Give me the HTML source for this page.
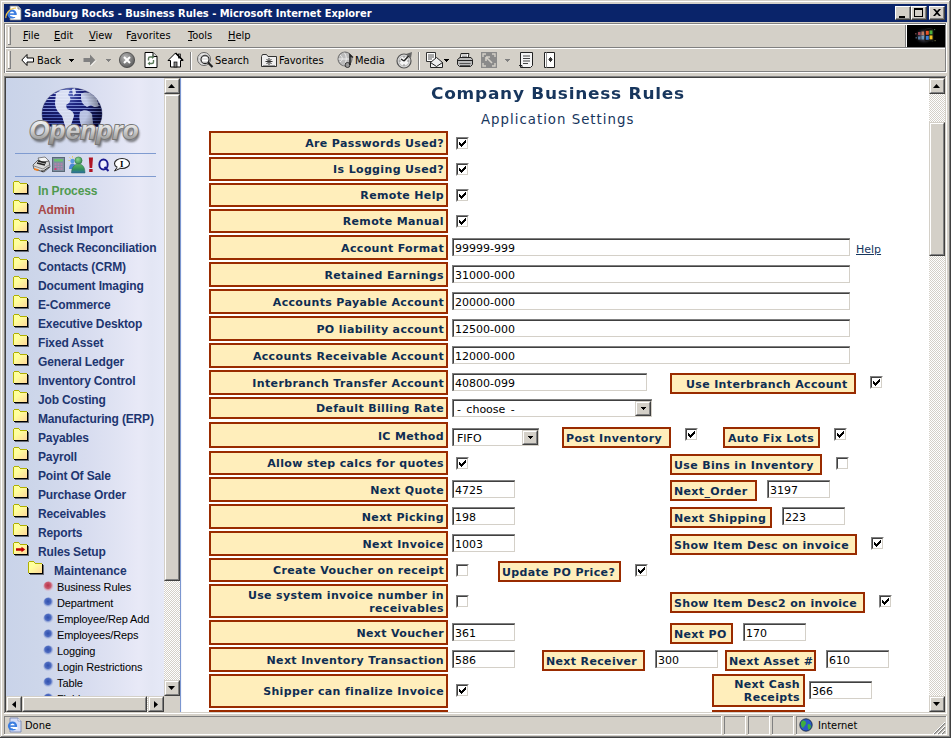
<!DOCTYPE html><html><head><meta charset="utf-8"><title>Sandburg Rocks - Business Rules</title><style>
*{margin:0;padding:0;box-sizing:border-box}
html,body{width:951px;height:738px;overflow:hidden;background:#d4d0c8}
body{position:relative;font-family:"DejaVu Sans Condensed","Liberation Sans",sans-serif;font-size:11px;color:#000}
.a{position:absolute}
.ln{position:absolute;overflow:hidden}
.ch{font-family:"DejaVu Sans Condensed","Liberation Sans",sans-serif;font-size:11px;white-space:nowrap;line-height:13px}
.lb{position:absolute;background:#ffeebb;border:2px solid #992b00;color:#0e2d52;font-family:"DejaVu Sans","Liberation Sans",sans-serif;font-weight:bold;font-size:11px;letter-spacing:.35px;text-align:right;line-height:13px;white-space:nowrap;padding-right:2px}
.lb span{position:absolute;right:2px;white-space:nowrap}
.in{position:absolute;background:#fff;border-top:1px solid #808080;border-left:1px solid #808080;height:18px}
.in i{position:absolute;left:0;top:0;right:0;bottom:0;border-top:1px solid #404040;border-left:1px solid #404040;border-right:1px solid #d4d0c8;border-bottom:1px solid #d4d0c8;font-style:normal;font-family:"DejaVu Sans","Liberation Sans",sans-serif;font-size:11px;line-height:13px;padding:2px 0 0 1px;white-space:nowrap;color:#000}
.cb{position:absolute;width:13px;height:13px;background:#fff;border-top:1px solid #808080;border-left:1px solid #808080;border-right:1px solid #fff;border-bottom:1px solid #fff}
.cb i{position:absolute;left:0;top:0;right:0;bottom:0;border-top:1px solid #404040;border-left:1px solid #404040;border-right:1px solid #d4d0c8;border-bottom:1px solid #d4d0c8}
.cb svg{position:absolute;left:2px;top:2px}
.btn{position:absolute;background:#d4d0c8;border-top:1px solid #fff;border-left:1px solid #fff;border-right:1px solid #404040;border-bottom:1px solid #404040}
.btn:before{content:"";position:absolute;left:0;top:0;right:0;bottom:0;border-right:1px solid #808080;border-bottom:1px solid #808080}
.sb{position:absolute;background:#d4d0c8;border-top:1px solid #d4d0c8;border-left:1px solid #d4d0c8;border-right:1px solid #404040;border-bottom:1px solid #404040}
.sb:before{content:"";position:absolute;left:0;top:0;right:0;bottom:0;border-top:1px solid #fff;border-left:1px solid #fff;border-right:1px solid #808080;border-bottom:1px solid #808080}
.trk{position:absolute;background-color:#fff;background-image:linear-gradient(45deg,#d4d0c8 25%,transparent 25%,transparent 75%,#d4d0c8 75%),linear-gradient(45deg,#d4d0c8 25%,transparent 25%,transparent 75%,#d4d0c8 75%);background-size:2px 2px;background-position:0 0,1px 1px}
.nav{position:absolute;font-family:"Liberation Sans",sans-serif;font-weight:bold;font-size:12px;color:#1e3670;white-space:nowrap;line-height:14px;letter-spacing:-.15px}
.sub{position:absolute;font-family:"Liberation Sans",sans-serif;font-size:11px;color:#000;white-space:nowrap;line-height:13px;letter-spacing:-.12px}
</style></head><body><div class="ln" style="left:1px;top:1px;width:948px;height:1px;background:#fff;"></div>
<div class="ln" style="left:1px;top:1px;width:1px;height:735px;background:#fff;"></div>
<div class="ln" style="left:950px;top:0px;width:1px;height:738px;background:#404040;"></div>
<div class="ln" style="left:0px;top:737px;width:951px;height:1px;background:#404040;"></div>
<div class="ln" style="left:949px;top:1px;width:1px;height:736px;background:#808080;"></div>
<div class="ln" style="left:1px;top:736px;width:949px;height:1px;background:#808080;"></div>
<div class="ln" style="left:4px;top:4px;width:943px;height:18px;background:#0a246a;"></div>
<div class="a ch" style="left:24px;top:7px;color:#fff;font-weight:bold;">Sandburg Rocks - Business Rules - Microsoft Internet Explorer</div>
<svg class="a" style="left:5px;top:5px" width="17" height="16" viewBox="0 0 17 16"><path d="M5 1h8l3 3v11H5z" fill="#fff" stroke="#777" stroke-width=".8"/><path d="M13 1v3h3" fill="#ddd" stroke="#777" stroke-width=".8"/><ellipse cx="7" cy="9" rx="4.6" ry="4.6" fill="#3b7de0"/><ellipse cx="7" cy="9" rx="2.3" ry="2.5" fill="#fff"/><rect x="3" y="8.3" width="8.5" height="1.6" fill="#3b7de0"/><rect x="7.5" y="10" width="4.5" height="2" fill="#fff"/><path d="M1 13C0 9 5 3 11 3" fill="none" stroke="#f5c542" stroke-width="1.1"/></svg>
<div class="btn" style="left:895px;top:6px;width:16px;height:14px"></div>
<div class="btn" style="left:911px;top:6px;width:16px;height:14px"></div>
<div class="btn" style="left:929px;top:6px;width:16px;height:14px"></div>
<div class="ln" style="left:899px;top:16px;width:6px;height:2px;background:#000;"></div>
<div class="a" style="left:914px;top:8px;width:9px;height:9px;border:1px solid #000;border-top-width:2px"></div>
<svg class="a" style="left:933px;top:9px" width="8" height="7" viewBox="0 0 8 7"><path d="M0 0h2l2 2 2-2h2L5 3.5 8 7H6L4 5 2 7H0l3-3.5z" fill="#000"/></svg>
<div class="ln" style="left:4px;top:23px;width:943px;height:1px;background:#808080;"></div>
<div class="ln" style="left:4px;top:24px;width:943px;height:1px;background:#fff;"></div>
<div class="ln" style="left:4px;top:47px;width:943px;height:1px;background:#808080;"></div>
<div class="ln" style="left:4px;top:48px;width:943px;height:1px;background:#fff;"></div>
<div class="ln" style="left:4px;top:71px;width:943px;height:1px;background:#808080;"></div>
<div class="ln" style="left:4px;top:72px;width:943px;height:1px;background:#fff;"></div>
<div class="ln" style="left:4px;top:23px;width:1px;height:50px;background:#808080;"></div>
<div class="ln" style="left:5px;top:24px;width:1px;height:48px;background:#fff;"></div>
<div class="ln" style="left:945px;top:24px;width:1px;height:48px;background:#808080;"></div>
<div class="ln" style="left:946px;top:23px;width:1px;height:50px;background:#fff;"></div>
<div class="ln" style="left:8px;top:27px;width:1px;height:17px;background:#fff;"></div>
<div class="ln" style="left:10px;top:27px;width:1px;height:18px;background:#808080;"></div>
<div class="ln" style="left:8px;top:44px;width:3px;height:1px;background:#808080;"></div>
<div class="ln" style="left:8px;top:51px;width:1px;height:17px;background:#fff;"></div>
<div class="ln" style="left:10px;top:51px;width:1px;height:18px;background:#808080;"></div>
<div class="ln" style="left:8px;top:68px;width:3px;height:1px;background:#808080;"></div>
<div class="a ch" style="left:23px;top:29px"><u>F</u>ile</div>
<div class="a ch" style="left:54px;top:29px"><u>E</u>dit</div>
<div class="a ch" style="left:89px;top:29px"><u>V</u>iew</div>
<div class="a ch" style="left:126px;top:29px">F<u>a</u>vorites</div>
<div class="a ch" style="left:188px;top:29px"><u>T</u>ools</div>
<div class="a ch" style="left:228px;top:29px"><u>H</u>elp</div>
<div class="ln" style="left:905px;top:25px;width:1px;height:22px;background:#808080;"></div>
<div class="ln" style="left:906px;top:25px;width:1px;height:22px;background:#fff;"></div>
<div class="ln" style="left:907px;top:25px;width:38px;height:22px;background:#000;"></div>
<svg class="a" style="left:913px;top:26px" width="26" height="20" viewBox="0 0 26 20"><defs><radialGradient id="tg"><stop offset="0" stop-color="#8a90a8" stop-opacity=".85"/><stop offset=".6" stop-color="#445" stop-opacity=".5"/><stop offset="1" stop-color="#000" stop-opacity="0"/></radialGradient></defs><ellipse cx="11" cy="10" rx="10" ry="9" fill="url(#tg)"/><path d="M12 3.5c2.5-1.2 5.5-1.2 8 0v12c-2.5-1.2-5.5-1.2-8 0z" fill="#0a0a0a" stroke="#1c1c1c" stroke-width="1"/><rect x="12.8" y="4.8" width="3" height="4" fill="#e8552a"/><rect x="16.5" y="4.4" width="3" height="4" fill="#4caf3c"/><rect x="12.8" y="9.8" width="3" height="4" fill="#3d7fd6"/><rect x="16.5" y="9.4" width="3" height="4" fill="#f2c522"/><rect x="5" y="6" width="2.5" height="3" fill="#c56" opacity=".75"/><rect x="8.5" y="5.5" width="2.5" height="3.5" fill="#d86" opacity=".8"/><rect x="5" y="10.5" width="2.5" height="3" fill="#69c" opacity=".75"/><rect x="8.5" y="10" width="2.5" height="3.5" fill="#7ac" opacity=".8"/><rect x="2" y="7" width="1.5" height="1.5" fill="#a66" opacity=".6"/><rect x="2.5" y="11" width="1.5" height="1.5" fill="#68a" opacity=".6"/><rect x="21" y="3" width="1.2" height="1.2" fill="#6a6" opacity=".6"/><rect x="21.5" y="14" width="1.2" height="1.2" fill="#aa6" opacity=".6"/></svg>
<div class="a ch" style="left:37px;top:54px;color:#000">Back</div>
<div class="a ch" style="left:215px;top:54px;color:#000">Search</div>
<div class="a ch" style="left:279px;top:54px;color:#000">Favorites</div>
<div class="a ch" style="left:355px;top:54px;color:#000">Media</div>
<svg class="a" style="left:21px;top:54px" width="13" height="12" viewBox="0 0 13 12"><path d="M6 .5L.8 6 6 11.5V8h6.5V4H6z" fill="#fff" stroke="#000" stroke-width="1"/></svg>
<svg class="a" style="left:69px;top:59px" width="5" height="3" viewBox="0 0 5 3" shape-rendering="crispEdges"><path d="M0 0h5v1h-1v1h-1v1h-1v-1h-1v-1h-1z" fill="#000"/></svg>
<svg class="a" style="left:83px;top:54px" width="14" height="12" viewBox="0 0 14 12"><path d="M7 .5L12.2 6 7 11.5V8H.5V4H7z" fill="#808080"/><path d="M7.8 11.8L13 6.5" stroke="#fff" stroke-width="1" fill="none"/></svg>
<svg class="a" style="left:106px;top:59px" width="5" height="3" viewBox="0 0 5 3" shape-rendering="crispEdges"><path d="M0 0h5v1h-1v1h-1v1h-1v-1h-1v-1h-1z" fill="#808080"/></svg>
<svg class="a" style="left:118px;top:51px" width="18" height="18" viewBox="0 0 18 18"><defs><radialGradient id="sg" cx=".4" cy=".35" r=".7"><stop offset="0" stop-color="#bbb"/><stop offset="1" stop-color="#555"/></radialGradient></defs><circle cx="9" cy="9" r="7.6" fill="url(#sg)" stroke="#444" stroke-width=".8"/><path d="M6 6l6 6M12 6l-6 6" stroke="#fff" stroke-width="2"/></svg>
<svg class="a" style="left:143px;top:51px" width="16" height="18" viewBox="0 0 16 18"><path d="M2 1.5h8l4 4v11H2z" fill="#fff" stroke="#000" stroke-width="1"/><path d="M10 1.5v4h4" fill="#ddd" stroke="#000" stroke-width="1"/><path d="M5.5 9.5V7.5q0-1.5 1.5-1.5h2.5" fill="none" stroke="#5a7a5a" stroke-width="1.4"/><path d="M9 4l2.5 2-2.5 2z" fill="#5a7a5a"/><path d="M10.5 9v2q0 1.5-1.5 1.5H6.5" fill="none" stroke="#5a7a5a" stroke-width="1.4"/><path d="M7 10.5l-2.5 2 2.5 2z" fill="#5a7a5a"/></svg>
<svg class="a" style="left:167px;top:51px" width="17" height="18" viewBox="0 0 17 18"><path d="M8.5 2L1 9.5h2.5V16h10V9.5H16z" fill="#fff" stroke="#000" stroke-width="1"/><rect x="11.5" y="3" width="2" height="4" fill="#999" stroke="#000" stroke-width=".7"/><rect x="7" y="11" width="3" height="5" fill="#888" stroke="#000" stroke-width=".7"/><path d="M8.5 2L16 9.5" stroke="#000" stroke-width="1.6"/></svg>
<div class="ln" style="left:190px;top:52px;width:1px;height:18px;background:#808080;"></div>
<div class="ln" style="left:191px;top:52px;width:1px;height:18px;background:#fff;"></div>
<svg class="a" style="left:196px;top:51px" width="19" height="18" viewBox="0 0 19 18"><circle cx="8" cy="8" r="6.5" fill="#e8e8e8" stroke="#666" stroke-width="1"/><circle cx="9" cy="8.5" r="4" fill="#fff" stroke="#222" stroke-width="1.3"/><path d="M12 11.5l4.5 4.5" stroke="#222" stroke-width="2.2"/><path d="M3 5h10M2 8h12M3 11h9" stroke="#aaa" stroke-width=".6"/></svg>
<svg class="a" style="left:261px;top:53px" width="16" height="14" viewBox="0 0 16 14"><path d="M.5 3.5V13.5H15.5V3.5H7L5.5 1.5H1.5z" fill="#eee" stroke="#333" stroke-width="1"/><path d="M8 5v7M4.5 8.5h7M5.5 6l5 5M10.5 6l-5 5" stroke="#333" stroke-width="1"/><path d="M2 12.5h12" stroke="#999" stroke-width="1"/></svg>
<svg class="a" style="left:337px;top:51px" width="19" height="18" viewBox="0 0 19 18"><circle cx="8" cy="8" r="7" fill="#bbb" stroke="#666" stroke-width="1"/><path d="M3 4c3 2 3 5 0 7M7 1.5c3 3 3 9 0 13M1.5 8h12" stroke="#eee" stroke-width="1" fill="none"/><circle cx="10.5" cy="14" r="2.5" fill="#999" stroke="#333" stroke-width="1"/><path d="M13 14V4l3 2.5" stroke="#222" stroke-width="1.6" fill="none"/></svg>
<svg class="a" style="left:395px;top:51px" width="19" height="18" viewBox="0 0 19 18"><circle cx="9" cy="10" r="7" fill="#ddd" stroke="#555" stroke-width="1.2"/><circle cx="9" cy="10" r="5" fill="#f4f4f4" stroke="#999" stroke-width=".6"/><path d="M9 10L15 3.5M9 10l-3-2" stroke="#222" stroke-width="1.5"/><path d="M11 3l6-2-1 6z" fill="#666"/><path d="M9 5.5v1M9 13.5v1M4.5 10h1M12.5 10h1" stroke="#333" stroke-width="1"/></svg>
<div class="ln" style="left:418px;top:52px;width:1px;height:18px;background:#808080;"></div>
<div class="ln" style="left:419px;top:52px;width:1px;height:18px;background:#fff;"></div>
<svg class="a" style="left:425px;top:51px" width="20" height="18" viewBox="0 0 20 18"><path d="M1.5 1.5h9v9h-9z" fill="#fff" stroke="#333" stroke-width="1"/><path d="M3 4h6M3 6h6M3 8h4" stroke="#555" stroke-width="1"/><path d="M5.5 11.5l6-5 6 5v5h-12z" fill="#eee" stroke="#222" stroke-width="1"/><path d="M5.5 11.5l6 4 6-4" fill="none" stroke="#222" stroke-width="1"/></svg>
<svg class="a" style="left:444px;top:59px" width="5" height="3" viewBox="0 0 5 3" shape-rendering="crispEdges"><path d="M0 0h5v1h-1v1h-1v1h-1v-1h-1v-1h-1z" fill="#000"/></svg>
<svg class="a" style="left:456px;top:52px" width="18" height="17" viewBox="0 0 18 17"><path d="M5 1.5h8l-1 5H4z" fill="#fff" stroke="#222" stroke-width="1"/><path d="M1.5 7.5L4 5.5h11l1.5 2v5l-2 2h-11l-2-2z" fill="#bbb" stroke="#222" stroke-width="1"/><path d="M1.5 8.5h15" stroke="#222" stroke-width="1"/><path d="M3.5 11.5h11M4 13.5h10" stroke="#555" stroke-width="1"/><path d="M6 3h5M6 4.5h5" stroke="#777" stroke-width=".7"/></svg>
<svg class="a" style="left:481px;top:52px" width="16" height="16" viewBox="0 0 16 16"><rect width="16" height="16" fill="#8a8a8a"/><path d="M2 5V2h3M14 5V2h-3M2 11v3h3M14 11v3h-3" stroke="#d4d0c8" stroke-width="1.4" fill="none"/><path d="M5 5l6 6M5 5h4M5 5v4" stroke="#d4d0c8" stroke-width="1.6" fill="none"/></svg>
<svg class="a" style="left:505px;top:59px" width="5" height="3" viewBox="0 0 5 3" shape-rendering="crispEdges"><path d="M0 0h5v1h-1v1h-1v1h-1v-1h-1v-1h-1z" fill="#808080"/></svg>
<svg class="a" style="left:518px;top:51px" width="17" height="18" viewBox="0 0 17 18"><path d="M2.5 1.5h12v13l-2 2h-10z" fill="#f4f4f4" stroke="#222" stroke-width="1"/><path d="M5 5h7M5 7.5h7M5 10h7M5 12.5h5" stroke="#444" stroke-width="1"/><path d="M1 14.5h3v2" fill="none" stroke="#222" stroke-width="1"/></svg>
<svg class="a" style="left:543px;top:51px" width="13" height="18" viewBox="0 0 13 18"><path d="M1.5 1.5h10v15h-10z" fill="#fff" stroke="#222" stroke-width="1"/><path d="M3.5 1.5v15" stroke="#999" stroke-width="1"/><path d="M7.5 6v5M5.5 8.5h4M6 7l3 3M9 7l-3 3" stroke="#222" stroke-width=".9"/></svg>
<div class="ln" style="left:4px;top:76px;width:943px;height:1px;background:#808080;"></div>
<div class="ln" style="left:4px;top:76px;width:1px;height:637px;background:#808080;"></div>
<div class="ln" style="left:5px;top:77px;width:941px;height:1px;background:#404040;"></div>
<div class="ln" style="left:5px;top:77px;width:1px;height:635px;background:#404040;"></div>
<div class="ln" style="left:4px;top:713px;width:943px;height:1px;background:#fff;"></div>
<div class="ln" style="left:946px;top:76px;width:1px;height:638px;background:#fff;"></div>
<div class="ln" style="left:5px;top:712px;width:941px;height:1px;background:#d4d0c8;"></div>
<div class="ln" style="left:945px;top:77px;width:1px;height:636px;background:#d4d0c8;"></div>
<div class="ln" style="left:182px;top:78px;width:747px;height:634px;background:#fff;"></div>
<div class="ln" style="left:180px;top:78px;width:1px;height:634px;background:#7b96d0;"></div>
<div class="ln" style="left:181px;top:78px;width:1px;height:634px;background:#f4f6fc;"></div>
<div class="a" style="left:6px;top:78px;width:158px;height:618px;overflow:hidden;background:linear-gradient(90deg,#c9d3e9 0,#cdd6ea 20%,#d7dcef 50%,#e0e3f3 70%,#e8e9f7 84%,#e3e6f4 92%,#e6e9f7 100%)">
<svg class="a" style="left:16px;top:4px" width="126" height="70" viewBox="0 0 126 70">
<defs>
<radialGradient id="gl" cx=".42" cy=".12" r=".75"><stop offset="0" stop-color="#6c7ecc"/><stop offset=".3" stop-color="#1e2480"/><stop offset="1" stop-color="#0a0a40"/></radialGradient>
<radialGradient id="gs" cx=".35" cy=".4" r=".7"><stop offset=".6" stop-color="#000" stop-opacity="0"/><stop offset="1" stop-color="#000018" stop-opacity=".55"/></radialGradient><linearGradient id="tx" x1="0" y1="0" x2="0" y2="1"><stop offset="0" stop-color="#ffffff"/><stop offset=".45" stop-color="#dcdcdc"/><stop offset=".75" stop-color="#a8a8a8"/><stop offset="1" stop-color="#8a8a8a"/></linearGradient>
<filter id="sh" x="-10%" y="-20%" width="130%" height="150%"><feGaussianBlur stdDeviation="1.3"/></filter>
<clipPath id="gc"><ellipse cx="50" cy="32" rx="30" ry="26"/></clipPath><clipPath id="gb"><rect x="0" y="0" width="126" height="45"/></clipPath>
</defs>
<g clip-path="url(#gb)"><ellipse cx="50" cy="32" rx="30.5" ry="26.5" fill="#8a8fa8"/>
<ellipse cx="50" cy="32" rx="30" ry="26" fill="url(#gl)"/>
<g clip-path="url(#gc)">
<path d="M15 8.5h70M15 11.5h70M15 14.5h70M15 17.5h70" stroke="#c2cef6" stroke-opacity=".9" stroke-width="1"/><path d="M15 20.5h70M15 23.5h70M15 26.5h70M15 29.5h70" stroke="#8799e0" stroke-opacity=".85" stroke-width="1"/><path d="M15 32.5h70M15 35.5h70M15 38.5h70M15 41.5h70M15 44.5h70M15 47.5h70" stroke="#5c70c8" stroke-opacity=".8" stroke-width="1"/>
<path d="M34 11c4-3 9-4 14-3l-2 5c3 2 3 5 1 8l-3 2 1 4c4 1 7 3 7 7l-3 9c-2 4-5 5-6 1l-3-10c-4-4-7-8-7-13z" fill="#e4eaf8" opacity=".93"/>
<path d="M50 7l3-1 1 5-3 3z" fill="#e4eaf8" opacity=".9"/>
<path d="M59 12c5-3 11-1 15 3l3 9c-3 2-6 1-8-1l-4 2c-4-2-6-5-6-9z" fill="#cfd8f0" opacity=".92"/>
<path d="M58 30c4-3 9-2 12 2l1 9c-1 5-4 9-8 10l-4-8c-2-5-2-9-1-13z" fill="#c7d0ec" opacity=".92"/>
<ellipse cx="50" cy="32" rx="30" ry="26" fill="url(#gs)"/>
</g></g>
<text x="62" y="57" text-anchor="middle" letter-spacing=".2" font-family="Liberation Sans, sans-serif" font-weight="bold" font-style="italic" font-size="26" fill="#444" opacity=".75" filter="url(#sh)" transform="translate(1.5 2.5)">Openpro</text>
<text x="62" y="57" text-anchor="middle" letter-spacing=".2" font-family="Liberation Sans, sans-serif" font-weight="bold" font-style="italic" font-size="26" fill="url(#tx)" stroke="#777" stroke-width="1.900" stroke-linejoin="round" paint-order="stroke">Openpro</text>
</svg><div class="ln" style="left:9px;top:75px;width:141px;height:1px;background:#7f9bd0"></div><div class="ln" style="left:9px;top:98px;width:141px;height:1px;background:#7f9bd0"></div><svg class="a" style="left:22px;top:74px" width="110" height="26" viewBox="0 0 110 26">
<defs><linearGradient id="pg" x1="0" y1="0" x2="0" y2="1"><stop offset="0" stop-color="#5fb85f"/><stop offset=".6" stop-color="#2f8f5f"/><stop offset="1" stop-color="#2f6fa8"/></linearGradient>
<radialGradient id="ph" cx=".4" cy=".35" r=".7"><stop offset="0" stop-color="#8fd88f"/><stop offset="1" stop-color="#2f8a4f"/></radialGradient></defs>
<g transform="translate(4 5)"><path d="M6 1l7-1 4 4-8 3z" fill="#f4f4f4" stroke="#555" stroke-width=".7"/><path d="M1 8l5-5 4 2 7-1 1 6-6 5-10-3z" fill="#d8d8d8" stroke="#444" stroke-width=".8"/><path d="M6 4l8 2M5 6l8 2" stroke="#222" stroke-width="1.3"/><path d="M2 9l9 3 6-4" stroke="#777" stroke-width=".8" fill="none"/><path d="M2 11l5 1.5-1 1.5-4-1z" fill="#f08020"/><path d="M10 13v2l7-5" stroke="#333" stroke-width="1" fill="none"/></g>
<g transform="translate(24 5)"><rect x=".5" y=".5" width="12" height="14" fill="#7f8fa0" stroke="#5a6878" stroke-width="1"/><rect x="2" y="2" width="9" height="2.5" fill="#6cc070"/><path d="M2.5 7h2M5.5 7h2M8.5 7h2M2.5 9.5h2M5.5 9.5h2M8.5 9.5h2M5.5 12h2M8.5 12h2" stroke="#c080b0" stroke-width="1.5"/><path d="M2.5 12h2" stroke="#e03070" stroke-width="1.8"/></g>
<g transform="translate(40 4)"><circle cx="4.5" cy="5" r="2.2" fill="#5a9ae0"/><path d="M1 13c0-3.5 1.5-5.5 3.5-5.5S8 9.5 8 13z" fill="#4a86d6"/><path d="M1.5 1.5l1 1M4.5 0v1.5M7 1.5l-1 1M.5 4.5h1.2" stroke="#e8c840" stroke-width=".8"/><circle cx="10.5" cy="4.5" r="3.6" fill="url(#ph)" stroke="#2a6a3a" stroke-width=".5"/><path d="M3.5 17c0-6 3-9 7-9s6.5 3 6.5 9z" fill="url(#pg)" stroke="#2a6a5a" stroke-width=".5"/></g>
<g transform="translate(60 5)"><path d="M.8 .5h4.2l-.8 10.5H1.6z" fill="#b01424"/><rect x="1.2" y="12" width="3.4" height="3" fill="#b01424"/></g>
<g transform="translate(70 6)"><ellipse cx="5.5" cy="6.5" rx="4.2" ry="5" fill="#f0f0ff" stroke="#1a1a90" stroke-width="1.900"/><path d="M6.5 9l4 4" stroke="#1a1a90" stroke-width="2"/></g>
<g transform="translate(85 6)"><ellipse cx="9" cy="5.5" rx="7.5" ry="5" fill="#fff" stroke="#222" stroke-width="1.100"/><path d="M4 9.5l-2.5 3.5 5.5-2.5z" fill="#fff" stroke="#222" stroke-width="1"/><path d="M4.5 9l2 1" stroke="#fff" stroke-width="1.5"/><text x="7" y="9" font-family="Liberation Serif, serif" font-weight="bold" font-size="9" fill="#000">I</text></g>
</svg><svg class="a" style="left:7px;top:103px" width="16" height="14" viewBox="0 0 16 14" shape-rendering="crispEdges"><defs><linearGradient id="fg0" x1="0" y1="0" x2="1" y2="1"><stop offset=".35" stop-color="#ffff9c"/><stop offset="1" stop-color="#ffd89a"/></linearGradient></defs><path d="M1 1h5l1 2h7v9H1z" fill="url(#fg0)"/><path d="M0 1h1v-1h5v1h1v1h-1v-1h-5v11h-1z" fill="#b0b000"/><path d="M7 2h7v1h-7z" fill="#b0b000"/><path d="M14 3h1v10h-14v-1h13z" fill="#000"/><path d="M15 4h1v10h-14v-1h13z" fill="#000" opacity=".5"/></svg><div class="nav" style="left:32px;top:106px;color:#4f9a4f">In Process</div><svg class="a" style="left:7px;top:122px" width="16" height="14" viewBox="0 0 16 14" shape-rendering="crispEdges"><defs><linearGradient id="fg1" x1="0" y1="0" x2="1" y2="1"><stop offset=".35" stop-color="#ffff9c"/><stop offset="1" stop-color="#ffd89a"/></linearGradient></defs><path d="M1 1h5l1 2h7v9H1z" fill="url(#fg1)"/><path d="M0 1h1v-1h5v1h1v1h-1v-1h-5v11h-1z" fill="#b0b000"/><path d="M7 2h7v1h-7z" fill="#b0b000"/><path d="M14 3h1v10h-14v-1h13z" fill="#000"/><path d="M15 4h1v10h-14v-1h13z" fill="#000" opacity=".5"/></svg><div class="nav" style="left:32px;top:125px;color:#a84848">Admin</div><svg class="a" style="left:7px;top:141px" width="16" height="14" viewBox="0 0 16 14" shape-rendering="crispEdges"><defs><linearGradient id="fg2" x1="0" y1="0" x2="1" y2="1"><stop offset=".35" stop-color="#ffff9c"/><stop offset="1" stop-color="#ffd89a"/></linearGradient></defs><path d="M1 1h5l1 2h7v9H1z" fill="url(#fg2)"/><path d="M0 1h1v-1h5v1h1v1h-1v-1h-5v11h-1z" fill="#b0b000"/><path d="M7 2h7v1h-7z" fill="#b0b000"/><path d="M14 3h1v10h-14v-1h13z" fill="#000"/><path d="M15 4h1v10h-14v-1h13z" fill="#000" opacity=".5"/></svg><div class="nav" style="left:32px;top:144px;color:#1e3670">Assist Import</div><svg class="a" style="left:7px;top:160px" width="16" height="14" viewBox="0 0 16 14" shape-rendering="crispEdges"><defs><linearGradient id="fg3" x1="0" y1="0" x2="1" y2="1"><stop offset=".35" stop-color="#ffff9c"/><stop offset="1" stop-color="#ffd89a"/></linearGradient></defs><path d="M1 1h5l1 2h7v9H1z" fill="url(#fg3)"/><path d="M0 1h1v-1h5v1h1v1h-1v-1h-5v11h-1z" fill="#b0b000"/><path d="M7 2h7v1h-7z" fill="#b0b000"/><path d="M14 3h1v10h-14v-1h13z" fill="#000"/><path d="M15 4h1v10h-14v-1h13z" fill="#000" opacity=".5"/></svg><div class="nav" style="left:32px;top:163px;color:#1e3670">Check Reconciliation</div><svg class="a" style="left:7px;top:179px" width="16" height="14" viewBox="0 0 16 14" shape-rendering="crispEdges"><defs><linearGradient id="fg4" x1="0" y1="0" x2="1" y2="1"><stop offset=".35" stop-color="#ffff9c"/><stop offset="1" stop-color="#ffd89a"/></linearGradient></defs><path d="M1 1h5l1 2h7v9H1z" fill="url(#fg4)"/><path d="M0 1h1v-1h5v1h1v1h-1v-1h-5v11h-1z" fill="#b0b000"/><path d="M7 2h7v1h-7z" fill="#b0b000"/><path d="M14 3h1v10h-14v-1h13z" fill="#000"/><path d="M15 4h1v10h-14v-1h13z" fill="#000" opacity=".5"/></svg><div class="nav" style="left:32px;top:182px;color:#1e3670">Contacts (CRM)</div><svg class="a" style="left:7px;top:198px" width="16" height="14" viewBox="0 0 16 14" shape-rendering="crispEdges"><defs><linearGradient id="fg5" x1="0" y1="0" x2="1" y2="1"><stop offset=".35" stop-color="#ffff9c"/><stop offset="1" stop-color="#ffd89a"/></linearGradient></defs><path d="M1 1h5l1 2h7v9H1z" fill="url(#fg5)"/><path d="M0 1h1v-1h5v1h1v1h-1v-1h-5v11h-1z" fill="#b0b000"/><path d="M7 2h7v1h-7z" fill="#b0b000"/><path d="M14 3h1v10h-14v-1h13z" fill="#000"/><path d="M15 4h1v10h-14v-1h13z" fill="#000" opacity=".5"/></svg><div class="nav" style="left:32px;top:201px;color:#1e3670">Document Imaging</div><svg class="a" style="left:7px;top:217px" width="16" height="14" viewBox="0 0 16 14" shape-rendering="crispEdges"><defs><linearGradient id="fg6" x1="0" y1="0" x2="1" y2="1"><stop offset=".35" stop-color="#ffff9c"/><stop offset="1" stop-color="#ffd89a"/></linearGradient></defs><path d="M1 1h5l1 2h7v9H1z" fill="url(#fg6)"/><path d="M0 1h1v-1h5v1h1v1h-1v-1h-5v11h-1z" fill="#b0b000"/><path d="M7 2h7v1h-7z" fill="#b0b000"/><path d="M14 3h1v10h-14v-1h13z" fill="#000"/><path d="M15 4h1v10h-14v-1h13z" fill="#000" opacity=".5"/></svg><div class="nav" style="left:32px;top:220px;color:#1e3670">E-Commerce</div><svg class="a" style="left:7px;top:236px" width="16" height="14" viewBox="0 0 16 14" shape-rendering="crispEdges"><defs><linearGradient id="fg7" x1="0" y1="0" x2="1" y2="1"><stop offset=".35" stop-color="#ffff9c"/><stop offset="1" stop-color="#ffd89a"/></linearGradient></defs><path d="M1 1h5l1 2h7v9H1z" fill="url(#fg7)"/><path d="M0 1h1v-1h5v1h1v1h-1v-1h-5v11h-1z" fill="#b0b000"/><path d="M7 2h7v1h-7z" fill="#b0b000"/><path d="M14 3h1v10h-14v-1h13z" fill="#000"/><path d="M15 4h1v10h-14v-1h13z" fill="#000" opacity=".5"/></svg><div class="nav" style="left:32px;top:239px;color:#1e3670">Executive Desktop</div><svg class="a" style="left:7px;top:255px" width="16" height="14" viewBox="0 0 16 14" shape-rendering="crispEdges"><defs><linearGradient id="fg8" x1="0" y1="0" x2="1" y2="1"><stop offset=".35" stop-color="#ffff9c"/><stop offset="1" stop-color="#ffd89a"/></linearGradient></defs><path d="M1 1h5l1 2h7v9H1z" fill="url(#fg8)"/><path d="M0 1h1v-1h5v1h1v1h-1v-1h-5v11h-1z" fill="#b0b000"/><path d="M7 2h7v1h-7z" fill="#b0b000"/><path d="M14 3h1v10h-14v-1h13z" fill="#000"/><path d="M15 4h1v10h-14v-1h13z" fill="#000" opacity=".5"/></svg><div class="nav" style="left:32px;top:258px;color:#1e3670">Fixed Asset</div><svg class="a" style="left:7px;top:274px" width="16" height="14" viewBox="0 0 16 14" shape-rendering="crispEdges"><defs><linearGradient id="fg9" x1="0" y1="0" x2="1" y2="1"><stop offset=".35" stop-color="#ffff9c"/><stop offset="1" stop-color="#ffd89a"/></linearGradient></defs><path d="M1 1h5l1 2h7v9H1z" fill="url(#fg9)"/><path d="M0 1h1v-1h5v1h1v1h-1v-1h-5v11h-1z" fill="#b0b000"/><path d="M7 2h7v1h-7z" fill="#b0b000"/><path d="M14 3h1v10h-14v-1h13z" fill="#000"/><path d="M15 4h1v10h-14v-1h13z" fill="#000" opacity=".5"/></svg><div class="nav" style="left:32px;top:277px;color:#1e3670">General Ledger</div><svg class="a" style="left:7px;top:293px" width="16" height="14" viewBox="0 0 16 14" shape-rendering="crispEdges"><defs><linearGradient id="fg10" x1="0" y1="0" x2="1" y2="1"><stop offset=".35" stop-color="#ffff9c"/><stop offset="1" stop-color="#ffd89a"/></linearGradient></defs><path d="M1 1h5l1 2h7v9H1z" fill="url(#fg10)"/><path d="M0 1h1v-1h5v1h1v1h-1v-1h-5v11h-1z" fill="#b0b000"/><path d="M7 2h7v1h-7z" fill="#b0b000"/><path d="M14 3h1v10h-14v-1h13z" fill="#000"/><path d="M15 4h1v10h-14v-1h13z" fill="#000" opacity=".5"/></svg><div class="nav" style="left:32px;top:296px;color:#1e3670">Inventory Control</div><svg class="a" style="left:7px;top:312px" width="16" height="14" viewBox="0 0 16 14" shape-rendering="crispEdges"><defs><linearGradient id="fg11" x1="0" y1="0" x2="1" y2="1"><stop offset=".35" stop-color="#ffff9c"/><stop offset="1" stop-color="#ffd89a"/></linearGradient></defs><path d="M1 1h5l1 2h7v9H1z" fill="url(#fg11)"/><path d="M0 1h1v-1h5v1h1v1h-1v-1h-5v11h-1z" fill="#b0b000"/><path d="M7 2h7v1h-7z" fill="#b0b000"/><path d="M14 3h1v10h-14v-1h13z" fill="#000"/><path d="M15 4h1v10h-14v-1h13z" fill="#000" opacity=".5"/></svg><div class="nav" style="left:32px;top:315px;color:#1e3670">Job Costing</div><svg class="a" style="left:7px;top:331px" width="16" height="14" viewBox="0 0 16 14" shape-rendering="crispEdges"><defs><linearGradient id="fg12" x1="0" y1="0" x2="1" y2="1"><stop offset=".35" stop-color="#ffff9c"/><stop offset="1" stop-color="#ffd89a"/></linearGradient></defs><path d="M1 1h5l1 2h7v9H1z" fill="url(#fg12)"/><path d="M0 1h1v-1h5v1h1v1h-1v-1h-5v11h-1z" fill="#b0b000"/><path d="M7 2h7v1h-7z" fill="#b0b000"/><path d="M14 3h1v10h-14v-1h13z" fill="#000"/><path d="M15 4h1v10h-14v-1h13z" fill="#000" opacity=".5"/></svg><div class="nav" style="left:32px;top:334px;color:#1e3670">Manufacturing (ERP)</div><svg class="a" style="left:7px;top:350px" width="16" height="14" viewBox="0 0 16 14" shape-rendering="crispEdges"><defs><linearGradient id="fg13" x1="0" y1="0" x2="1" y2="1"><stop offset=".35" stop-color="#ffff9c"/><stop offset="1" stop-color="#ffd89a"/></linearGradient></defs><path d="M1 1h5l1 2h7v9H1z" fill="url(#fg13)"/><path d="M0 1h1v-1h5v1h1v1h-1v-1h-5v11h-1z" fill="#b0b000"/><path d="M7 2h7v1h-7z" fill="#b0b000"/><path d="M14 3h1v10h-14v-1h13z" fill="#000"/><path d="M15 4h1v10h-14v-1h13z" fill="#000" opacity=".5"/></svg><div class="nav" style="left:32px;top:353px;color:#1e3670">Payables</div><svg class="a" style="left:7px;top:369px" width="16" height="14" viewBox="0 0 16 14" shape-rendering="crispEdges"><defs><linearGradient id="fg14" x1="0" y1="0" x2="1" y2="1"><stop offset=".35" stop-color="#ffff9c"/><stop offset="1" stop-color="#ffd89a"/></linearGradient></defs><path d="M1 1h5l1 2h7v9H1z" fill="url(#fg14)"/><path d="M0 1h1v-1h5v1h1v1h-1v-1h-5v11h-1z" fill="#b0b000"/><path d="M7 2h7v1h-7z" fill="#b0b000"/><path d="M14 3h1v10h-14v-1h13z" fill="#000"/><path d="M15 4h1v10h-14v-1h13z" fill="#000" opacity=".5"/></svg><div class="nav" style="left:32px;top:372px;color:#1e3670">Payroll</div><svg class="a" style="left:7px;top:388px" width="16" height="14" viewBox="0 0 16 14" shape-rendering="crispEdges"><defs><linearGradient id="fg15" x1="0" y1="0" x2="1" y2="1"><stop offset=".35" stop-color="#ffff9c"/><stop offset="1" stop-color="#ffd89a"/></linearGradient></defs><path d="M1 1h5l1 2h7v9H1z" fill="url(#fg15)"/><path d="M0 1h1v-1h5v1h1v1h-1v-1h-5v11h-1z" fill="#b0b000"/><path d="M7 2h7v1h-7z" fill="#b0b000"/><path d="M14 3h1v10h-14v-1h13z" fill="#000"/><path d="M15 4h1v10h-14v-1h13z" fill="#000" opacity=".5"/></svg><div class="nav" style="left:32px;top:391px;color:#1e3670">Point Of Sale</div><svg class="a" style="left:7px;top:407px" width="16" height="14" viewBox="0 0 16 14" shape-rendering="crispEdges"><defs><linearGradient id="fg16" x1="0" y1="0" x2="1" y2="1"><stop offset=".35" stop-color="#ffff9c"/><stop offset="1" stop-color="#ffd89a"/></linearGradient></defs><path d="M1 1h5l1 2h7v9H1z" fill="url(#fg16)"/><path d="M0 1h1v-1h5v1h1v1h-1v-1h-5v11h-1z" fill="#b0b000"/><path d="M7 2h7v1h-7z" fill="#b0b000"/><path d="M14 3h1v10h-14v-1h13z" fill="#000"/><path d="M15 4h1v10h-14v-1h13z" fill="#000" opacity=".5"/></svg><div class="nav" style="left:32px;top:410px;color:#1e3670">Purchase Order</div><svg class="a" style="left:7px;top:426px" width="16" height="14" viewBox="0 0 16 14" shape-rendering="crispEdges"><defs><linearGradient id="fg17" x1="0" y1="0" x2="1" y2="1"><stop offset=".35" stop-color="#ffff9c"/><stop offset="1" stop-color="#ffd89a"/></linearGradient></defs><path d="M1 1h5l1 2h7v9H1z" fill="url(#fg17)"/><path d="M0 1h1v-1h5v1h1v1h-1v-1h-5v11h-1z" fill="#b0b000"/><path d="M7 2h7v1h-7z" fill="#b0b000"/><path d="M14 3h1v10h-14v-1h13z" fill="#000"/><path d="M15 4h1v10h-14v-1h13z" fill="#000" opacity=".5"/></svg><div class="nav" style="left:32px;top:429px;color:#1e3670">Receivables</div><svg class="a" style="left:7px;top:445px" width="16" height="14" viewBox="0 0 16 14" shape-rendering="crispEdges"><defs><linearGradient id="fg18" x1="0" y1="0" x2="1" y2="1"><stop offset=".35" stop-color="#ffff9c"/><stop offset="1" stop-color="#ffd89a"/></linearGradient></defs><path d="M1 1h5l1 2h7v9H1z" fill="url(#fg18)"/><path d="M0 1h1v-1h5v1h1v1h-1v-1h-5v11h-1z" fill="#b0b000"/><path d="M7 2h7v1h-7z" fill="#b0b000"/><path d="M14 3h1v10h-14v-1h13z" fill="#000"/><path d="M15 4h1v10h-14v-1h13z" fill="#000" opacity=".5"/></svg><div class="nav" style="left:32px;top:448px;color:#1e3670">Reports</div><svg class="a" style="left:7px;top:464px" width="16" height="14" viewBox="0 0 16 14" shape-rendering="crispEdges"><defs><linearGradient id="fg19" x1="0" y1="0" x2="1" y2="1"><stop offset=".35" stop-color="#ffff9c"/><stop offset="1" stop-color="#ffd89a"/></linearGradient></defs><path d="M1 1h5l1 2h7v9H1z" fill="url(#fg19)"/><path d="M0 1h1v-1h5v1h1v1h-1v-1h-5v11h-1z" fill="#b0b000"/><path d="M7 2h7v1h-7z" fill="#b0b000"/><path d="M14 3h1v10h-14v-1h13z" fill="#000"/><path d="M15 4h1v10h-14v-1h13z" fill="#000" opacity=".5"/><path shape-rendering="auto" d="M3 6.3h5.5V4.8l3.700 2.700-3.700 2.700V8.700H3z" fill="#c00000"/></svg><div class="nav" style="left:32px;top:467px;color:#1e3670">Rules Setup</div><svg class="a" style="left:22px;top:483px" width="16" height="14" viewBox="0 0 16 14" shape-rendering="crispEdges"><defs><linearGradient id="fg99" x1="0" y1="0" x2="1" y2="1"><stop offset=".35" stop-color="#ffff9c"/><stop offset="1" stop-color="#ffd89a"/></linearGradient></defs><path d="M1 1h5l1 2h7v9H1z" fill="url(#fg99)"/><path d="M0 1h1v-1h5v1h1v1h-1v-1h-5v11h-1z" fill="#b0b000"/><path d="M7 2h7v1h-7z" fill="#b0b000"/><path d="M14 3h1v10h-14v-1h13z" fill="#000"/><path d="M15 4h1v10h-14v-1h13z" fill="#000" opacity=".5"/></svg><div class="nav" style="left:48px;top:486px;letter-spacing:0">Maintenance</div><svg width="0" height="0" class="a"><defs><radialGradient id="bb" cx=".45" cy=".4" r=".6"><stop offset="0" stop-color="#2f4fae"/><stop offset=".5" stop-color="#4f6cc0"/><stop offset="1" stop-color="#c8d2ec" stop-opacity="0"/></radialGradient><radialGradient id="br" cx=".45" cy=".4" r=".6"><stop offset="0" stop-color="#b8324a"/><stop offset=".5" stop-color="#c95a6e"/><stop offset="1" stop-color="#e6c8d6" stop-opacity="0"/></radialGradient></defs></svg><svg class="a" style="left:37px;top:503px" width="11" height="11"><circle cx="5.5" cy="5.5" r="5.2" fill="url(#br)"/></svg><div class="sub" style="left:51px;top:503px">Business Rules</div><svg class="a" style="left:37px;top:519px" width="11" height="11"><circle cx="5.5" cy="5.5" r="5.2" fill="url(#bb)"/></svg><div class="sub" style="left:51px;top:519px">Department</div><svg class="a" style="left:37px;top:535px" width="11" height="11"><circle cx="5.5" cy="5.5" r="5.2" fill="url(#bb)"/></svg><div class="sub" style="left:51px;top:535px">Employee/Rep Add</div><svg class="a" style="left:37px;top:551px" width="11" height="11"><circle cx="5.5" cy="5.5" r="5.2" fill="url(#bb)"/></svg><div class="sub" style="left:51px;top:551px">Employees/Reps</div><svg class="a" style="left:37px;top:567px" width="11" height="11"><circle cx="5.5" cy="5.5" r="5.2" fill="url(#bb)"/></svg><div class="sub" style="left:51px;top:567px">Logging</div><svg class="a" style="left:37px;top:583px" width="11" height="11"><circle cx="5.5" cy="5.5" r="5.2" fill="url(#bb)"/></svg><div class="sub" style="left:51px;top:583px">Login Restrictions</div><svg class="a" style="left:37px;top:599px" width="11" height="11"><circle cx="5.5" cy="5.5" r="5.2" fill="url(#bb)"/></svg><div class="sub" style="left:51px;top:599px">Table</div><svg class="a" style="left:37px;top:615px" width="11" height="11"><circle cx="5.5" cy="5.5" r="5.2" fill="url(#bb)"/></svg><div class="sub" style="left:51px;top:615px">Fields</div>
</div>
<div class="trk" style="left:164px;top:78px;width:16px;height:618px"></div>
<div class="sb" style="left:164px;top:78px;width:16px;height:16px"></div>
<svg class="a" style="left:168px;top:84px" width="7" height="4" viewBox="0 0 7 4"><path d="M0 4L3.5 0 7 4z" fill="#000"/></svg>
<div class="sb" style="left:164px;top:94px;width:16px;height:487px"></div>
<div class="sb" style="left:164px;top:680px;width:16px;height:16px"></div>
<svg class="a" style="left:168px;top:686px" width="7" height="4" viewBox="0 0 7 4"><path d="M0 0h7L3.5 4z" fill="#000"/></svg>
<div class="trk" style="left:6px;top:696px;width:158px;height:16px"></div>
<div class="sb" style="left:6px;top:696px;width:16px;height:16px"></div>
<svg class="a" style="left:12px;top:701px" width="4" height="7" viewBox="0 0 4 7"><path d="M4 0v7L0 3.5z" fill="#000"/></svg>
<div class="sb" style="left:22px;top:696px;width:125px;height:16px"></div>
<div class="sb" style="left:148px;top:696px;width:16px;height:16px"></div>
<svg class="a" style="left:154px;top:701px" width="4" height="7" viewBox="0 0 4 7"><path d="M0 0v7L4 3.5z" fill="#000"/></svg>
<div class="ln" style="left:164px;top:696px;width:16px;height:16px;background:#d4d0c8;"></div>
<div class="trk" style="left:929px;top:78px;width:16px;height:634px"></div>
<div class="sb" style="left:929px;top:78px;width:16px;height:16px"></div>
<svg class="a" style="left:933px;top:84px" width="7" height="4" viewBox="0 0 7 4"><path d="M0 4L3.5 0 7 4z" fill="#000"/></svg>
<div class="sb" style="left:929px;top:122px;width:16px;height:134px"></div>
<div class="sb" style="left:929px;top:696px;width:16px;height:16px"></div>
<svg class="a" style="left:933px;top:702px" width="7" height="4" viewBox="0 0 7 4"><path d="M0 0h7L3.5 4z" fill="#000"/></svg>
<div class="a" style="left:182px;top:78px;width:747px;height:634px;overflow:hidden">
<div class="a" style="left:249px;top:6px;font-family:'DejaVu Sans','Liberation Sans',sans-serif;font-weight:bold;font-size:16px;letter-spacing:.7px;color:#17365d;white-space:nowrap;line-height:20px;transform:scaleX(1.06);transform-origin:0 0">Company Business Rules</div><div class="a" style="left:299px;top:33px;font-family:'DejaVu Sans','Liberation Sans',sans-serif;font-size:13.33px;letter-spacing:1px;color:#17365d;white-space:nowrap;line-height:17px">Application Settings</div><div class="lb" style="left:27px;top:53px;width:239px;height:24px;padding-top:4px;padding-right:2px">Are Passwords Used?</div><div class="lb" style="left:27px;top:79px;width:239px;height:24px;padding-top:4px;padding-right:2px">Is Logging Used?</div><div class="lb" style="left:27px;top:105px;width:239px;height:24px;padding-top:4px;padding-right:2px">Remote Help</div><div class="lb" style="left:27px;top:131px;width:239px;height:24px;padding-top:4px;padding-right:2px">Remote Manual</div><div class="lb" style="left:27px;top:157px;width:239px;height:25px;padding-top:5px;padding-right:2px">Account Format</div><div class="lb" style="left:27px;top:184px;width:239px;height:25px;padding-top:5px;padding-right:2px">Retained Earnings</div><div class="lb" style="left:27px;top:211px;width:239px;height:25px;padding-top:5px;padding-right:2px">Accounts Payable Account</div><div class="lb" style="left:27px;top:238px;width:239px;height:25px;padding-top:5px;padding-right:2px">PO liability account</div><div class="lb" style="left:27px;top:265px;width:239px;height:25px;padding-top:5px;padding-right:2px">Accounts Receivable Account</div><div class="lb" style="left:27px;top:292px;width:239px;height:25px;padding-top:5px;padding-right:2px">Interbranch Transfer Account</div><div class="lb" style="left:27px;top:319px;width:239px;height:22px;padding-top:3px;padding-right:2px">Default Billing Rate</div><div class="lb" style="left:27px;top:344px;width:239px;height:26px;padding-top:6px;padding-right:2px">IC Method</div><div class="lb" style="left:27px;top:373px;width:239px;height:24px;padding-top:4px;padding-right:2px">Allow step calcs for quotes</div><div class="lb" style="left:27px;top:399px;width:239px;height:25px;padding-top:5px;padding-right:2px">Next Quote</div><div class="lb" style="left:27px;top:426px;width:239px;height:25px;padding-top:5px;padding-right:2px">Next Picking</div><div class="lb" style="left:27px;top:453px;width:239px;height:25px;padding-top:5px;padding-right:2px">Next Invoice</div><div class="lb" style="left:27px;top:480px;width:239px;height:24px;padding-top:4px;padding-right:2px">Create Voucher on receipt</div><div class="lb" style="left:27px;top:506px;width:239px;height:34px;padding-top:3px;padding-right:2px">Use system invoice number in<br>receivables</div><div class="lb" style="left:27px;top:542px;width:239px;height:25px;padding-top:5px;padding-right:2px">Next Voucher</div><div class="lb" style="left:27px;top:569px;width:239px;height:25px;padding-top:5px;padding-right:2px">Next Inventory Transaction</div><div class="lb" style="left:27px;top:596px;width:239px;height:34px;padding-top:9px;padding-right:2px">Shipper can finalize Invoice</div><div class="lb" style="left:27px;top:632px;width:239px;height:24px;padding-top:4px;padding-right:2px">&nbsp;</div><div class="cb" style="left:274px;top:59px"><i></i><svg width="7" height="7" viewBox="0 0 7 7" shape-rendering="crispEdges"><path d="M0 2h1v1h1v1h1v-1h1v-1h1v-1h1v-1h1v3h-1v1h-1v1h-1v1h-1v1h-1v-1h-1v-1h-1z" fill="#000"/></svg></div><div class="cb" style="left:274px;top:85px"><i></i><svg width="7" height="7" viewBox="0 0 7 7" shape-rendering="crispEdges"><path d="M0 2h1v1h1v1h1v-1h1v-1h1v-1h1v-1h1v3h-1v1h-1v1h-1v1h-1v1h-1v-1h-1v-1h-1z" fill="#000"/></svg></div><div class="cb" style="left:274px;top:111px"><i></i><svg width="7" height="7" viewBox="0 0 7 7" shape-rendering="crispEdges"><path d="M0 2h1v1h1v1h1v-1h1v-1h1v-1h1v-1h1v3h-1v1h-1v1h-1v1h-1v1h-1v-1h-1v-1h-1z" fill="#000"/></svg></div><div class="cb" style="left:274px;top:137px"><i></i><svg width="7" height="7" viewBox="0 0 7 7" shape-rendering="crispEdges"><path d="M0 2h1v1h1v1h1v-1h1v-1h1v-1h1v-1h1v3h-1v1h-1v1h-1v1h-1v1h-1v-1h-1v-1h-1z" fill="#000"/></svg></div><div class="in" style="left:270px;top:160px;width:398px"><i>99999-999</i></div><div class="in" style="left:270px;top:187px;width:398px"><i>31000-000</i></div><div class="in" style="left:270px;top:214px;width:398px"><i>20000-000</i></div><div class="in" style="left:270px;top:241px;width:398px"><i>12500-000</i></div><div class="in" style="left:270px;top:268px;width:398px"><i>12000-000</i></div><div class="a" style="left:674px;top:165px;font-family:'DejaVu Sans','Liberation Sans',sans-serif;font-size:11px;color:#17365d;text-decoration:underline;line-height:13px">Help</div><div class="in" style="left:270px;top:295px;width:195px"><i>40800-099</i></div><div class="lb" style="left:488px;top:295px;width:186px;height:21px;padding-top:3px;text-align:left;padding-right:0;padding-left:14px">Use Interbranch Account</div><div class="cb" style="left:688px;top:298px"><i></i><svg width="7" height="7" viewBox="0 0 7 7" shape-rendering="crispEdges"><path d="M0 2h1v1h1v1h1v-1h1v-1h1v-1h1v-1h1v3h-1v1h-1v1h-1v1h-1v1h-1v-1h-1v-1h-1z" fill="#000"/></svg></div><div class="in" style="left:270px;top:321px;width:200px"><i style="padding-left:3px"><span style="word-spacing:1.9px">- choose -</span></i><div class="sb" style="right:1px;top:1px;width:16px;height:15px"></div><svg class="a" style="right:6px;top:7px" width="5" height="3" viewBox="0 0 5 3" shape-rendering="crispEdges"><path d="M0 0h5v1h-1v1h-1v1h-1v-1h-1v-1h-1z" fill="#000"/></svg></div><div class="in" style="left:270px;top:350px;width:87px"><i style="padding-left:3px">FIFO</i><div class="sb" style="right:1px;top:1px;width:16px;height:15px"></div><svg class="a" style="right:6px;top:7px" width="5" height="3" viewBox="0 0 5 3" shape-rendering="crispEdges"><path d="M0 0h5v1h-1v1h-1v1h-1v-1h-1v-1h-1z" fill="#000"/></svg></div><div class="lb" style="left:380px;top:349px;width:109px;height:21px;padding-top:3px;text-align:left;padding-right:0;padding-left:2px">Post Inventory</div><div class="cb" style="left:503px;top:350px"><i></i><svg width="7" height="7" viewBox="0 0 7 7" shape-rendering="crispEdges"><path d="M0 2h1v1h1v1h1v-1h1v-1h1v-1h1v-1h1v3h-1v1h-1v1h-1v1h-1v1h-1v-1h-1v-1h-1z" fill="#000"/></svg></div><div class="lb" style="left:541px;top:349px;width:97px;height:21px;padding-top:3px;text-align:left;padding-right:0;padding-left:3px">Auto Fix Lots</div><div class="cb" style="left:652px;top:350px"><i></i><svg width="7" height="7" viewBox="0 0 7 7" shape-rendering="crispEdges"><path d="M0 2h1v1h1v1h1v-1h1v-1h1v-1h1v-1h1v3h-1v1h-1v1h-1v1h-1v1h-1v-1h-1v-1h-1z" fill="#000"/></svg></div><div class="cb" style="left:274px;top:379px"><i></i><svg width="7" height="7" viewBox="0 0 7 7" shape-rendering="crispEdges"><path d="M0 2h1v1h1v1h1v-1h1v-1h1v-1h1v-1h1v3h-1v1h-1v1h-1v1h-1v1h-1v-1h-1v-1h-1z" fill="#000"/></svg></div><div class="lb" style="left:488px;top:376px;width:152px;height:21px;padding-top:3px;text-align:left;padding-right:0;padding-left:2px">Use Bins in Inventory</div><div class="cb" style="left:654px;top:379px"><i></i></div><div class="in" style="left:270px;top:402px;width:63px"><i>4725</i></div><div class="lb" style="left:488px;top:402px;width:87px;height:21px;padding-top:3px;text-align:left;padding-right:0;padding-left:2px">Next_Order</div><div class="in" style="left:585px;top:402px;width:63px"><i>3197</i></div><div class="in" style="left:270px;top:429px;width:63px"><i>198</i></div><div class="lb" style="left:488px;top:429px;width:102px;height:21px;padding-top:3px;text-align:left;padding-right:0;padding-left:2px">Next Shipping</div><div class="in" style="left:600px;top:429px;width:63px"><i>223</i></div><div class="in" style="left:270px;top:456px;width:63px"><i>1003</i></div><div class="lb" style="left:488px;top:456px;width:187px;height:21px;padding-top:3px;text-align:left;padding-right:0;padding-left:2px">Show Item Desc on invoice</div><div class="cb" style="left:689px;top:459px"><i></i><svg width="7" height="7" viewBox="0 0 7 7" shape-rendering="crispEdges"><path d="M0 2h1v1h1v1h1v-1h1v-1h1v-1h1v-1h1v3h-1v1h-1v1h-1v1h-1v1h-1v-1h-1v-1h-1z" fill="#000"/></svg></div><div class="cb" style="left:274px;top:486px"><i></i></div><div class="lb" style="left:316px;top:483px;width:123px;height:21px;padding-top:3px;text-align:left;padding-right:0;padding-left:2px">Update PO Price?</div><div class="cb" style="left:453px;top:486px"><i></i><svg width="7" height="7" viewBox="0 0 7 7" shape-rendering="crispEdges"><path d="M0 2h1v1h1v1h1v-1h1v-1h1v-1h1v-1h1v3h-1v1h-1v1h-1v1h-1v1h-1v-1h-1v-1h-1z" fill="#000"/></svg></div><div class="cb" style="left:274px;top:517px"><i></i></div><div class="lb" style="left:488px;top:514px;width:195px;height:21px;padding-top:3px;text-align:left;padding-right:0;padding-left:2px">Show Item Desc2 on invoice</div><div class="cb" style="left:697px;top:517px"><i></i><svg width="7" height="7" viewBox="0 0 7 7" shape-rendering="crispEdges"><path d="M0 2h1v1h1v1h1v-1h1v-1h1v-1h1v-1h1v3h-1v1h-1v1h-1v1h-1v1h-1v-1h-1v-1h-1z" fill="#000"/></svg></div><div class="in" style="left:270px;top:545px;width:63px"><i>361</i></div><div class="lb" style="left:488px;top:545px;width:63px;height:21px;padding-top:3px;text-align:left;padding-right:0;padding-left:2px">Next PO</div><div class="in" style="left:561px;top:545px;width:63px"><i>170</i></div><div class="in" style="left:270px;top:572px;width:63px"><i>586</i></div><div class="lb" style="left:360px;top:572px;width:103px;height:21px;padding-top:3px;text-align:left;padding-right:0;padding-left:2px">Next Receiver</div><div class="in" style="left:473px;top:572px;width:63px"><i>300</i></div><div class="lb" style="left:543px;top:572px;width:91px;height:21px;padding-top:3px;text-align:left;padding-right:0;padding-left:2px">Next Asset #</div><div class="in" style="left:644px;top:572px;width:63px"><i>610</i></div><div class="cb" style="left:274px;top:606px"><i></i><svg width="7" height="7" viewBox="0 0 7 7" shape-rendering="crispEdges"><path d="M0 2h1v1h1v1h1v-1h1v-1h1v-1h1v-1h1v3h-1v1h-1v1h-1v1h-1v1h-1v-1h-1v-1h-1z" fill="#000"/></svg></div><div class="lb" style="left:530px;top:596px;width:93px;height:33px;padding-top:2px;padding-right:3px">Next Cash<br>Receipts</div><div class="in" style="left:627px;top:603px;width:63px"><i>366</i></div><div class="lb" style="left:530px;top:632px;width:93px;height:24px;padding-top:4px;padding-right:2px">&nbsp;</div>
</div>
<div class="ln" style="left:4px;top:716px;width:718px;height:1px;background:#808080;"></div>
<div class="ln" style="left:4px;top:716px;width:1px;height:19px;background:#808080;"></div>
<div class="ln" style="left:4px;top:734px;width:718px;height:1px;background:#fff;"></div>
<div class="ln" style="left:721px;top:716px;width:1px;height:19px;background:#fff;"></div>
<div class="ln" style="left:724px;top:716px;width:22px;height:1px;background:#808080;"></div>
<div class="ln" style="left:724px;top:716px;width:1px;height:19px;background:#808080;"></div>
<div class="ln" style="left:724px;top:734px;width:22px;height:1px;background:#fff;"></div>
<div class="ln" style="left:745px;top:716px;width:1px;height:19px;background:#fff;"></div>
<div class="ln" style="left:748px;top:716px;width:22px;height:1px;background:#808080;"></div>
<div class="ln" style="left:748px;top:716px;width:1px;height:19px;background:#808080;"></div>
<div class="ln" style="left:748px;top:734px;width:22px;height:1px;background:#fff;"></div>
<div class="ln" style="left:769px;top:716px;width:1px;height:19px;background:#fff;"></div>
<div class="ln" style="left:772px;top:716px;width:22px;height:1px;background:#808080;"></div>
<div class="ln" style="left:772px;top:716px;width:1px;height:19px;background:#808080;"></div>
<div class="ln" style="left:772px;top:734px;width:22px;height:1px;background:#fff;"></div>
<div class="ln" style="left:793px;top:716px;width:1px;height:19px;background:#fff;"></div>
<div class="ln" style="left:796px;top:716px;width:151px;height:1px;background:#808080;"></div>
<div class="ln" style="left:796px;top:716px;width:1px;height:19px;background:#808080;"></div>
<div class="ln" style="left:796px;top:734px;width:151px;height:1px;background:#fff;"></div>
<div class="ln" style="left:946px;top:716px;width:1px;height:19px;background:#fff;"></div>
<div class="a ch" style="left:25px;top:719px">Done</div>
<div class="a ch" style="left:818px;top:719px">Internet</div>
<svg class="a" style="left:6px;top:717px" width="16" height="16" viewBox="0 0 16 16"><path d="M4 1h8l3 3v11H4z" fill="#d4dcf6" stroke="#7080b0" stroke-width=".8"/><path d="M12 1v3h3" fill="#fff" stroke="#7080b0" stroke-width=".6"/><ellipse cx="6.5" cy="9" rx="4.6" ry="4.6" fill="#3b7de0"/><ellipse cx="6.5" cy="9" rx="2.3" ry="2.5" fill="#fff"/><rect x="2.5" y="8.3" width="8.5" height="1.6" fill="#3b7de0"/><rect x="7" y="10" width="4.5" height="2" fill="#fff"/></svg>
<svg class="a" style="left:799px;top:718px" width="14" height="14" viewBox="0 0 14 14"><circle cx="7" cy="7" r="6.2" fill="#2a58c8" stroke="#123" stroke-width=".8"/><path d="M3 3c2-1 4 0 4 2s-2 3-3 5c-2-1-3-5-1-7zM9 6c2 0 3 1 3 3l-2 3c-1-1-2-4-1-6z" fill="#3fae3f"/></svg>
<svg class="a" style="left:933px;top:722px" width="13" height="13" viewBox="0 0 13 13"><path d="M12 1L1 12M12 5L5 12M12 9L9 12" stroke="#808080" stroke-width="1.4"/><path d="M12 0L0 12M12 4L4 12M12 8L8 12" stroke="#fff" stroke-width="1"/></svg></body></html>
